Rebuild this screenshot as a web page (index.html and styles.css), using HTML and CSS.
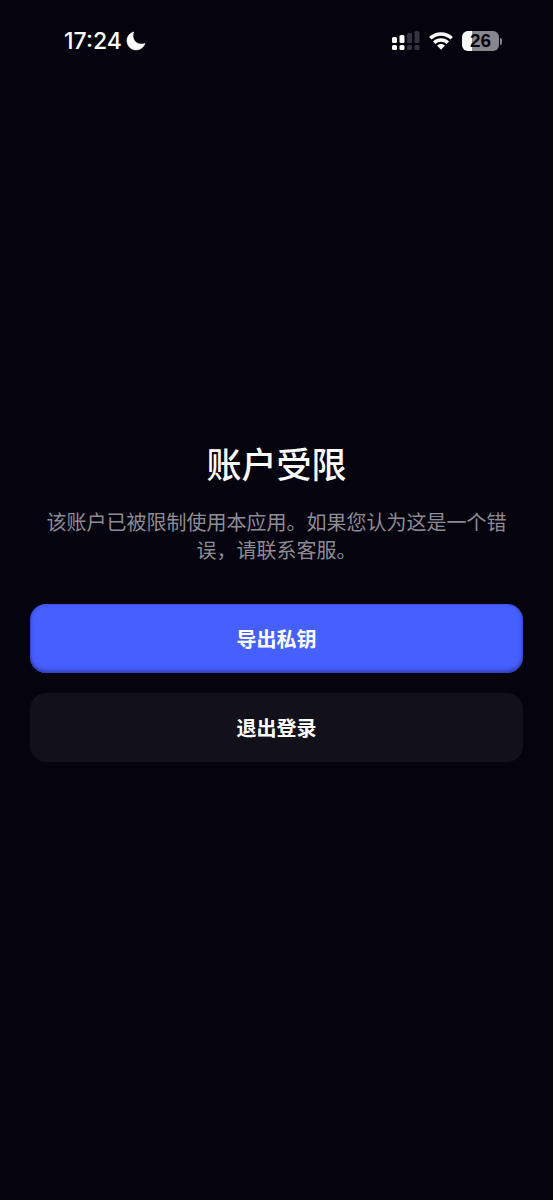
FILE: index.html
```html
<!DOCTYPE html>
<html lang="zh-CN">
<head>
<meta charset="utf-8">
<meta name="viewport" content="width=device-width, initial-scale=1">
<title>账户受限</title>
<link rel="stylesheet" href="styles.css">
</head>
<body>
<div class="screen">
  <header class="status-bar">
    <div class="status-group">
      <span class="clock">17:24</span>
      <svg class="moon" width="20" height="20" viewBox="0 0 20 20" aria-hidden="true">
        <path d="M7.600 1C3.600 2.200 1 5.600 1 9.700c0 5.100 4 9.200 9.100 9.200 4 0 7.500-2.500 8.800-6.400-1.200.4-2.300.6-3.400.6-5 0-8.500-3.600-8.500-8.400 0-1.300.2-2.600.6-3.700z" fill="#fff" stroke="#fff" stroke-width=".6" stroke-linejoin="round"/>
      </svg>
    </div>
    <div class="status-group status-right">
      <svg class="signal" width="28" height="20" viewBox="0 0 28 20" aria-hidden="true">
        <g fill="#fff">
          <rect x="0" y="6" width="5" height="6" rx="1.500"/>
          <rect x="0" y="14" width="5" height="5" rx="1.500"/>
          <rect x="7.500" y="4" width="5" height="8" rx="1.500"/>
          <rect x="7.500" y="14" width="5" height="5" rx="1.500"/>
        </g>
        <g fill="#35343d">
          <rect x="15" y="2" width="5" height="10" rx="1.500"/>
          <rect x="15" y="14" width="5" height="5" rx="1.500"/>
          <rect x="22.500" y="0" width="5" height="12" rx="1.500"/>
          <rect x="22.500" y="14" width="5" height="5" rx="1.500"/>
        </g>
      </svg>
      <svg class="wifi" width="24" height="18" viewBox="0 0 24 18" aria-hidden="true">
        <g fill="none" stroke="#fff" stroke-width="3.500">
          <path d="M1.300 6.300C7.300.4 16.700.4 22.700 6.300"/>
          <path d="M5.200 10.700C9 7 15 7 18.800 10.700"/>
        </g>
        <path d="M8 13.600c2.300-2.100 5.700-2.100 8 0L12 17.700z" fill="#fff"/>
      </svg>
      <div class="battery">
        <span class="battery-body">26</span>
        <span class="battery-cap"></span>
      </div>
    </div>
  </header>
  <main class="content">
    <h1 class="title">账户受限</h1>
    <p class="message">该账户已被限制使用本应用。如果您认为这是一个错误，请联系客服。</p>
    <div class="actions">
      <button class="button button-primary" type="button">导出私钥</button>
      <button class="button button-secondary" type="button">退出登录</button>
    </div>
  </main>
</div>
</body>
</html>
```
FILE: styles.css
```css
* {
  box-sizing: border-box;
}

body {
  margin: 0;
  background: #05030d;
  color: #fff;
  font-family: "Noto Sans CJK SC", sans-serif;
}

.screen {
  display: flex;
  flex-direction: column;
  min-height: 100vh;
}

.status-bar {
  display: flex;
  align-items: center;
  justify-content: space-between;
  height: 82px;
  padding: 0 51px 0 64px;
}

.status-group {
  display: flex;
  align-items: center;
  gap: 4px;
}

.status-right {
  gap: 9px;
}

.clock {
  font: 500 23px/28px Inter, sans-serif;
}

.battery {
  display: flex;
  align-items: center;
  gap: 1px;
}

.battery-body {
  width: 37px;
  height: 20px;
  border-radius: 6px;
  background: linear-gradient(to right, #fff 26%, #87868c 26%);
  color: #05030d;
  font: 700 19px/20px "Liberation Sans", sans-serif;
  text-align: center;
}

.battery-cap {
  width: 2px;
  height: 7px;
  border-radius: 0 2px 2px 0;
  background: #87868c;
}

.content {
  display: flex;
  flex: 1;
  flex-direction: column;
  justify-content: center;
  padding: 0 30px 82px;
}

.title {
  margin: 0 0 20px;
  font-size: 35px;
  font-weight: 500;
  line-height: 50px;
  text-align: center;
}

.message {
  margin: 0 0 40px;
  color: #8d8c95;
  font-size: 20px;
  font-weight: 400;
  line-height: 28px;
  text-align: center;
}

.actions {
  display: flex;
  flex-direction: column;
  gap: 20px;
}

.button {
  width: 100%;
  height: 69px;
  padding: 0;
  border: 0;
  border-radius: 16px;
  color: #fff;
  font: 700 20px/28px "Noto Sans CJK SC", sans-serif;
  cursor: pointer;
}

.button-primary {
  background: #465fff;
  box-shadow: inset 0 -2px 4px #2c3aa8, inset 0 0 2px #3444b8;
}

.button-secondary {
  background: #121019;
}
```
